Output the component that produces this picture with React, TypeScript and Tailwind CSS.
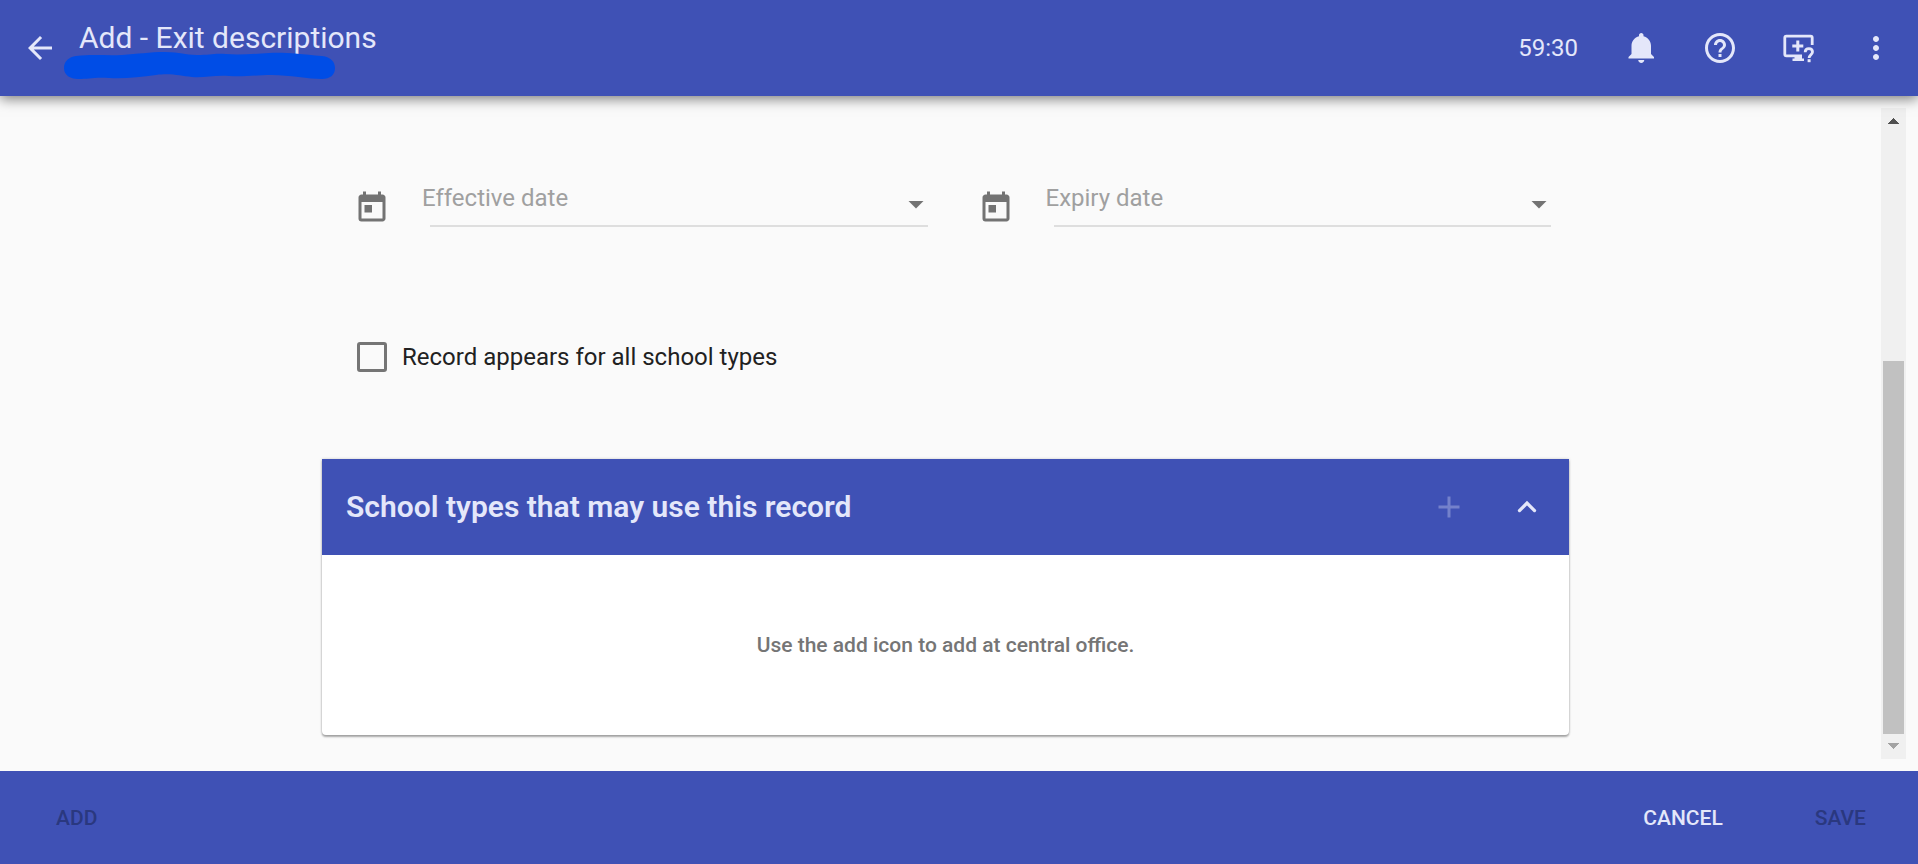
import { useState } from "react";
import type { ReactNode } from "react";
import { MdAdd, MdArrowBack, MdArrowDropDown, MdHelpOutline, MdMoreVert, MdToday } from "react-icons/md";

function BellIcon() {
  return (
    <svg viewBox="0 0 24 24" className="size-9" fill="currentColor" aria-hidden="true">
      <path d="M11.5 22c1.1 0 2-.9 2-2h-4c0 1.1.9 2 2 2zm6.5-6v-5.5c0-3.07-2.13-5.64-5-6.32V3.5c0-.83-.67-1.5-1.5-1.5S10 2.67 10 3.5v.68c-2.87.68-5 3.25-5 6.32V16l-2 2v1h17v-1l-2-2z" />
    </svg>
  );
}

function ScreenHelpIcon() {
  return (
    <svg viewBox="0 0 36 36" className="size-9" aria-hidden="true">
      <path
        d="M32.200 15V7.800a1.600 1.600 0 0 0-1.600-1.600H6.400a1.600 1.600 0 0 0-1.600 1.600v16.400a1.600 1.600 0 0 0 1.600 1.600H22"
        fill="none"
        stroke="currentColor"
        strokeWidth="2.800"
      />
      <path d="M14.500 26h7.500v2.500h2V31H12.500v-2.500h2z" fill="currentColor" />
      <path d="M17.800 10.500v11M12.300 16h11" stroke="currentColor" strokeWidth="3" />
      <path
        d="M25.200 22.200c0-2 1.500-3.500 3.700-3.500s3.600 1.500 3.600 3.300c0 2.600-3.400 3-3.400 6"
        fill="none"
        stroke="currentColor"
        strokeWidth="2.800"
      />
      <path d="M27.600 29.200h3v3h-3z" fill="currentColor" />
    </svg>
  );
}

function IconButton({ label, children }: { label: string; children: ReactNode }) {
  return (
    <button type="button" aria-label={label} className="flex size-18 items-center justify-center rounded-full">
      {children}
    </button>
  );
}

function DateField({ id, label }: { id: string; label: string }) {
  return (
    <div className="flex flex-1 items-start pr-[18px] pl-8">
      <MdToday className="mt-1 size-9 text-[#737373]" aria-hidden="true" />
      <div className="relative ml-10 flex h-[41px] flex-1 items-start border-b-2 border-[#dedede]">
        <label htmlFor={id} className="absolute -left-2 text-2xl leading-6 text-[#a0a0a0]">
          {label}
        </label>
        <input id={id} type="text" className="h-9 min-w-0 flex-1 bg-transparent text-2xl outline-none" />
        <button type="button" aria-label={`Open ${label} calendar`} className="-mr-1.5">
          <MdArrowDropDown className="size-9 text-[#737373]" />
        </button>
      </div>
    </div>
  );
}

function ScrollRail() {
  return (
    <div className="flex w-[25px] shrink-0 flex-col items-center bg-[#f0f0f0]" aria-hidden="true">
      <svg viewBox="0 0 25 25" className="size-[25px]" shapeRendering="crispEdges">
        <path d="M7 16h11l-5.500-6z" fill="#505050" />
      </svg>
      <div className="flex-[228]" />
      <div className="w-[21px] flex-[373] bg-[#c1c1c1]" />
      <svg viewBox="0 0 25 25" className="size-[25px]" shapeRendering="crispEdges">
        <path d="M7 9h11l-5.500 6z" fill="#a3a3a3" />
      </svg>
    </div>
  );
}

export default function App() {
  const [allTypes, setAllTypes] = useState(false);
  const [open, setOpen] = useState(true);

  return (
    <div className="flex min-h-screen flex-col bg-[#fafafa] font-[Roboto,sans-serif] text-[#212121]">
      <header className="relative z-10 flex h-24 items-center bg-[#3f51b5] pr-1.5 pl-1 text-[#e4e7fa] shadow-[0_3px_12px_rgba(0,0,0,0.5)]">
        <IconButton label="Back">
          <MdArrowBack className="size-9" />
        </IconButton>
        <div className="relative h-24 flex-1 pt-5">
          <h1 className="pl-[3px] text-[30px] leading-9">Add - Exit descriptions</h1>
          <svg viewBox="0 0 272 30" className="absolute top-[51px] -left-3 h-[30px] w-[272px]" aria-hidden="true">
            <path
              d="M12 5C30 3 42 5 58 4S85 1 101 1 120 4 133 4 150 2 162 3 190 3 205 2 235 3 258 5C267 6 271 11 271 17 271 24 266 28 258 28 245 28 225 24 208 24S180 26 165 25 140 27 128 26 108 22 92 24 60 28 45 27 25 28 14 28C6 28 0 24 0 17S5 6 12 5z"
              fill="#004de6"
            />
          </svg>
        </div>
        <time className="mr-7 text-2xl leading-7">59:30</time>
        <div className="flex gap-1.5">
          <IconButton label="Notifications">
            <BellIcon />
          </IconButton>
          <IconButton label="Help">
            <MdHelpOutline className="size-9" />
          </IconButton>
          <IconButton label="Screen help">
            <ScreenHelpIcon />
          </IconButton>
          <IconButton label="More options">
            <MdMoreVert className="size-9" />
          </IconButton>
        </div>
      </header>

      <main className="flex flex-1 p-3">
        <div className="flex flex-1 flex-col items-center pr-0.5">
          <form id="record" className="flex w-full max-w-[1247px] flex-col pt-[78px]">
            <div className="flex">
              <DateField id="effective" label="Effective date" />
              <DateField id="expiry" label="Expiry date" />
            </div>

            <label className="mt-28 flex items-center gap-[15px] self-start pl-[35px] text-2xl leading-9">
              <input
                type="checkbox"
                checked={allTypes}
                onChange={(e) => setAllTypes(e.target.checked)}
                className="size-[30px] appearance-none rounded-[3px] border-3 border-[#757575] checked:bg-[#3f51b5]"
              />
              Record appears for all school types
            </label>

            <section className="mt-[84px] rounded-b bg-white shadow-[0_2px_2px_rgba(0,0,0,0.3),0_0_3px_rgba(0,0,0,0.2)]">
              <div className="flex h-24 items-center bg-[#3f51b5] pr-1.5 pl-6 text-[#e4e7fa]">
                <h2 className="flex-1 text-[30px] leading-9 font-semibold">School types that may use this record</h2>
                <div className="flex gap-1.5">
                  <button
                    type="button"
                    disabled
                    aria-label="Add school type"
                    className="flex size-18 items-center justify-center text-[#7481cb]"
                  >
                    <MdAdd className="size-9" />
                  </button>
                  <button
                    type="button"
                    aria-label="Toggle section"
                    aria-expanded={open}
                    onClick={() => setOpen(!open)}
                    className="flex size-18 items-center justify-center"
                  >
                    <svg viewBox="0 0 24 24" className="size-9" fill="none" aria-hidden="true">
                      <path d="M7 14.400l5-5 5 5" stroke="currentColor" strokeWidth="2.200" strokeLinecap="round" />
                    </svg>
                  </button>
                </div>
              </div>
              {open && (
                <p className="py-[76px] text-center text-[21px] leading-7 font-medium text-[#757575]">
                  Use the add icon to add at central office.
                </p>
              )}
            </section>
          </form>
        </div>
        <ScrollRail />
      </main>

      <footer className="flex h-[93px] items-center justify-between bg-[#3f51b5] px-7 text-[21px] leading-8 font-medium">
        <button type="button" disabled className="px-7 text-[#2a387f]">
          ADD
        </button>
        <div className="flex gap-10">
          <button type="button" className="px-7 text-[#e4e7fa]">
            CANCEL
          </button>
          <button type="submit" form="record" disabled className="px-6 text-[#2a387f]">
            SAVE
          </button>
        </div>
      </footer>
    </div>
  );
}
